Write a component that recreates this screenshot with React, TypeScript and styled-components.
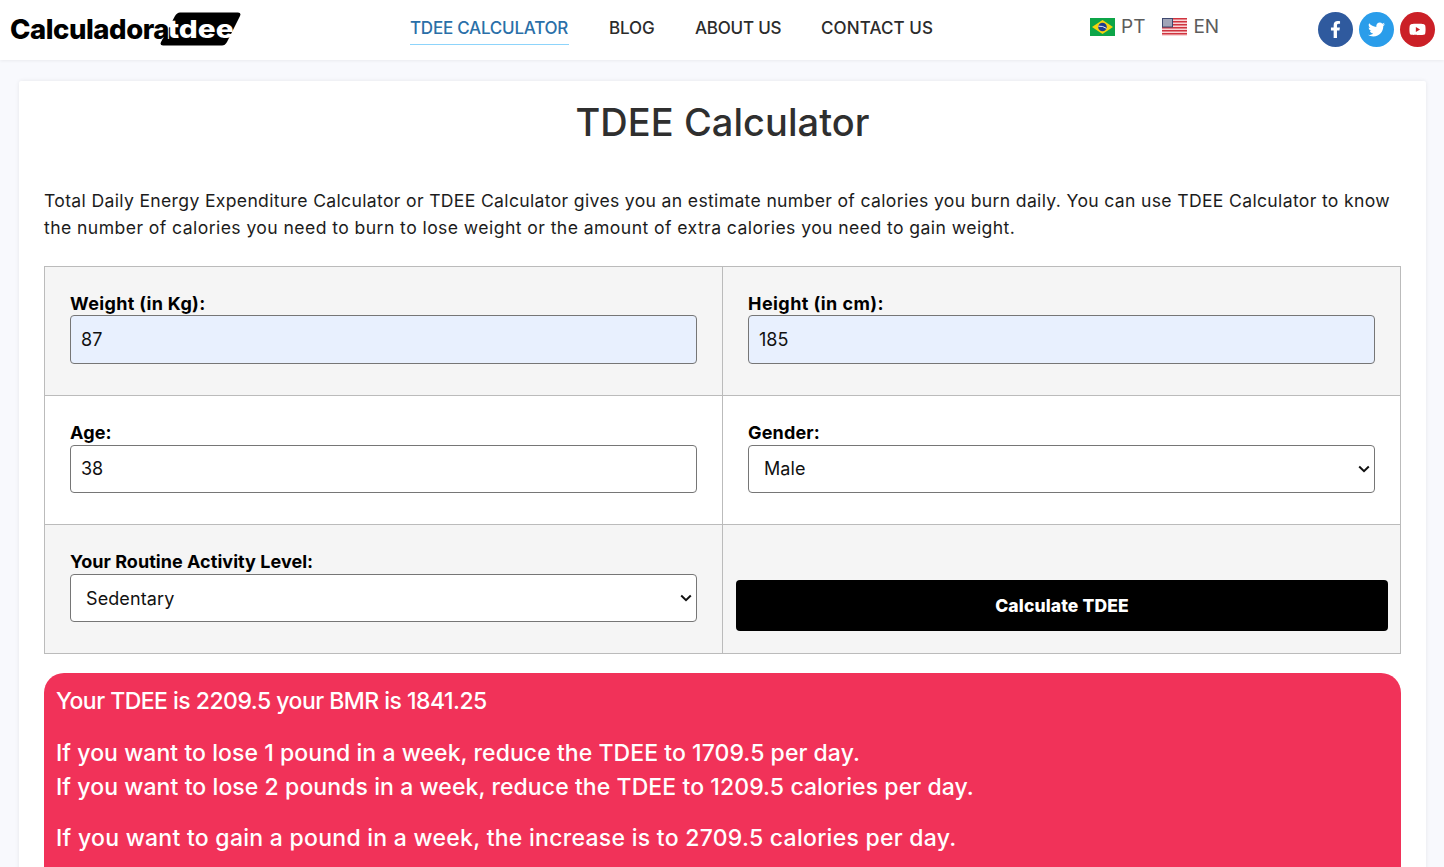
import React from 'react';
import styled, { createGlobalStyle } from 'styled-components';
import { FaFacebookF, FaTwitter, FaYoutube } from 'react-icons/fa';

const GlobalStyle = createGlobalStyle`
  html, body {
    margin: 0;
    padding: 0;
    background: #f8f9fd;
  }
  * {
    box-sizing: border-box;
  }
`;

const FONT = `Inter, "Open Sans", "Liberation Sans", sans-serif`;

const CHEVRON = `url("data:image/svg+xml,%3Csvg xmlns='http://www.w3.org/2000/svg' width='12' height='8' viewBox='0 0 12 8'%3E%3Cpath d='M1.200 1.500L6 6.200L10.800 1.500' fill='none' stroke='%23111' stroke-width='2'/%3E%3C/svg%3E")`;

const Page = styled.div`
  height: 867px;
  overflow: hidden;
  font-family: ${FONT};
  color: #000;
`;

const Header = styled.header`
  display: grid;
  grid-template-columns: 410px 680px 228px 1fr;
  align-items: center;
  height: 60px;
  background: #fff;
  box-shadow: 0 1px 3px rgba(0, 0, 0, 0.06);
`;

const Logo = styled.a`
  display: flex;
  align-items: center;
  padding-left: 10px;
  margin-top: -3px;
  font-size: 27.5px;
  font-weight: 800;
  letter-spacing: -0.45px;
  color: #000;
`;

const LogoWord = styled.span`
  position: relative;
  z-index: 1;
  text-shadow: 1px 0 0 #fff;
`;

const LogoBadge = styled.span`
  position: relative;
  display: inline-flex;
  align-items: center;
  justify-content: center;
  width: 81px;
  height: 34px;
  margin-left: -9px;
  color: #fff;

  svg {
    position: absolute;
    inset: 0;
  }
`;

const LogoBadgeText = styled.span`
  position: relative;
  font-size: 25px;
  letter-spacing: 0;
  transform: scaleX(1.19);
`;

const Nav = styled.nav`
  display: flex;
  gap: 40px;
  align-items: flex-start;
  align-self: start;
  padding-top: 13px;
`;

const NavLink = styled.a<{ $active?: boolean; $width: number; $spacing: number }>`
  display: block;
  width: ${(p) => p.$width}px;
  height: 32px;
  padding-top: 4px;
  font-size: 17px;
  line-height: 22px;
  font-weight: 500;
  letter-spacing: ${(p) => p.$spacing}px;
  white-space: nowrap;
  color: ${(p) => (p.$active ? '#2a6fa8' : '#2b2b2b')};
  border-bottom: 1px solid ${(p) => (p.$active ? '#8dd4fb' : 'transparent')};
`;

const Langs = styled.div`
  display: flex;
  gap: 17px;
  margin-top: -7px;
`;

const Lang = styled.a`
  display: flex;
  align-items: center;
  gap: 6px;
  font-size: 19px;
  font-weight: 400;
  color: #5c5c5c;
`;

const Socials = styled.div`
  display: flex;
  gap: 6px;
  margin-top: -2px;
`;

const Social = styled.a<{ $bg: string }>`
  display: flex;
  align-items: center;
  justify-content: center;
  width: 35px;
  height: 35px;
  border-radius: 50%;
  background: ${(p) => p.$bg};
  color: #fff;
  font-size: 17px;
`;

const Card = styled.main`
  margin: 21px 18px 0 19px;
  padding: 0 25px;
  background: #fff;
  box-shadow: 0 0 4px rgba(0, 0, 0, 0.08);
  border-radius: 2px;
`;

const Title = styled.h1`
  margin: 0;
  padding-top: 16px;
  height: 105.6px;
  text-align: center;
  font-size: 38px;
  line-height: 50px;
  font-weight: 500;
  letter-spacing: 0.05px;
  color: #2f2f2f;
`;

const Intro = styled.p`
  margin: 0 0 25px;
  font-size: 17.6px;
  line-height: 27px;
  color: #1c1c1c;
  white-space: nowrap;
`;

const IntroLine = styled.span<{ $spacing: number }>`
  display: block;
  letter-spacing: ${(p) => p.$spacing}px;
`;

const FormGrid = styled.div`
  display: grid;
  grid-template-columns: 677px 1fr;
  grid-auto-rows: 129.2px;
  border: 1px solid #bbb;
  border-bottom: 0;
`;

const Cell = styled.div<{ $shaded?: boolean; $right?: boolean }>`
  display: flex;
  flex-direction: column;
  padding: 25px 25px 0;
  background: ${(p) => (p.$shaded ? '#f5f5f5' : '#fff')};
  border-bottom: 1px solid #bbb;
  border-left: ${(p) => (p.$right ? '1px solid #bbb' : '0')};
`;

const ButtonCell = styled(Cell)`
  padding: 55px 12px 0 13px;
`;

const Label = styled.label<{ $spacing?: number }>`
  height: 23.8px;
  font-size: 18px;
  line-height: 24px;
  font-weight: 700;
  letter-spacing: ${(p) => p.$spacing ?? 0.15}px;
`;

const TextInput = styled.input<{ $filled?: boolean }>`
  width: 100%;
  height: 48.6px;
  padding: 0 10px;
  font-family: ${FONT};
  font-size: 18px;
  color: #111;
  background: ${(p) => (p.$filled ? '#e8f0fe' : '#fff')};
  border: 1px solid #767676;
  border-radius: 4px;
`;

const SelectInput = styled.select`
  appearance: none;
  width: 100%;
  height: 48.6px;
  padding: 0 15px;
  font-family: ${FONT};
  font-size: 18px;
  letter-spacing: 0.1px;
  color: #111;
  background: #fff ${CHEVRON} no-repeat right 4px center;
  border: 1px solid #767676;
  border-radius: 4px;
`;

const SubmitButton = styled.button`
  width: 100%;
  height: 51px;
  font-family: ${FONT};
  font-size: 17.5px;
  font-weight: 800;
  letter-spacing: 0.13px;
  color: #fff;
  background: #000;
  border: 0;
  border-radius: 4px;
`;

const Result = styled.section`
  margin-top: 19px;
  padding: 11px 12px 20px;
  min-height: 300px;
  background: #f13259;
  border-radius: 20px;
  color: #fff;
  font-size: 23px;
  line-height: 34px;
  font-weight: 500;
`;

const ResultBlock = styled.div`
  margin: 0 0 17.5px;
  white-space: nowrap;
`;

const ResultLine = styled.span<{ $spacing: number }>`
  display: block;
  letter-spacing: ${(p) => p.$spacing}px;
`;

const LogoShape = () => (
  <svg width="81" height="34" viewBox="0 0 81 34">
    <path d="M20 0.500H78Q81.500 0.500 80 4L67 30Q65 33.500 62 33.500H3Q-0.500 33.500 1 30L15 4Q17 0.500 20 0.500Z" fill="#000" />
  </svg>
);

const BrazilFlag = () => (
  <svg width="25" height="18" viewBox="0 0 25 18">
    <rect width="25" height="18" fill="#0da548" />
    <path d="M12.500 2L23 9L12.500 16L2 9Z" fill="#f5d30f" />
    <circle cx="12.500" cy="9" r="4.300" fill="#1d3d8f" />
    <path d="M8.400 8.200Q12.500 7.600 16.500 10.400" stroke="#fff" strokeWidth="0.9" fill="none" />
  </svg>
);

const UsFlag = () => (
  <svg width="25" height="18" viewBox="0 0 25 18">
    <rect width="25" height="18" fill="#f9d5d6" />
    {[0, 3, 6, 9, 12, 15].map((y) => (
      <rect key={y} y={y} width="25" height="1.500" fill="#d0343f" />
    ))}
    <rect width="11" height="9.500" fill="#3f4a70" />
    <rect x="1" y="1" width="9" height="7.500" fill="#a1a5b8" />
  </svg>
);

const App: React.FC = () => {
  return (
    <Page>
      <GlobalStyle />
      <Header>
        <Logo>
          <LogoWord>Calculadora</LogoWord>
          <LogoBadge>
            <LogoShape />
            <LogoBadgeText>tdee</LogoBadgeText>
          </LogoBadge>
        </Logo>
        <Nav>
          <NavLink $active $width={159} $spacing={-0.23}>TDEE CALCULATOR</NavLink>
          <NavLink $width={46} $spacing={-0.1}>BLOG</NavLink>
          <NavLink $width={86} $spacing={-0.22}>ABOUT US</NavLink>
          <NavLink $width={112} $spacing={0.1}>CONTACT US</NavLink>
        </Nav>
        <Langs>
          <Lang><BrazilFlag />PT</Lang>
          <Lang><UsFlag />EN</Lang>
        </Langs>
        <Socials>
          <Social $bg="#2f5a9e"><FaFacebookF /></Social>
          <Social $bg="#2a9dea"><FaTwitter /></Social>
          <Social $bg="#cb2027"><FaYoutube /></Social>
        </Socials>
      </Header>
      <Card>
        <Title>TDEE Calculator</Title>
        <Intro>
          <IntroLine $spacing={0.327}>
            Total Daily Energy Expenditure Calculator or TDEE Calculator gives you an estimate number of calories you burn daily. You can use TDEE Calculator to know
          </IntroLine>
          <IntroLine $spacing={0.42}>
            the number of calories you need to burn to lose weight or the amount of extra calories you need to gain weight.
          </IntroLine>
        </Intro>
        <FormGrid>
          <Cell $shaded>
            <Label $spacing={0.35}>Weight (in Kg):</Label>
            <TextInput $filled defaultValue="87" />
          </Cell>
          <Cell $shaded $right>
            <Label $spacing={0.44}>Height (in cm):</Label>
            <TextInput $filled defaultValue="185" />
          </Cell>
          <Cell>
            <Label>Age:</Label>
            <TextInput defaultValue="38" />
          </Cell>
          <Cell $right>
            <Label>Gender:</Label>
            <SelectInput defaultValue="Male">
              <option>Male</option>
              <option>Female</option>
            </SelectInput>
          </Cell>
          <Cell $shaded>
            <Label $spacing={0.04}>Your Routine Activity Level:</Label>
            <SelectInput defaultValue="Sedentary">
              <option>Sedentary</option>
              <option>Lightly active</option>
            </SelectInput>
          </Cell>
          <ButtonCell $shaded $right>
            <SubmitButton>Calculate TDEE</SubmitButton>
          </ButtonCell>
        </FormGrid>
        <Result>
          <ResultBlock>
            <ResultLine $spacing={-0.52}>Your TDEE is 2209.5 your BMR is 1841.25</ResultLine>
          </ResultBlock>
          <ResultBlock>
            <ResultLine $spacing={0.06}>If you want to lose 1 pound in a week, reduce the TDEE to 1709.5 per day.</ResultLine>
            <ResultLine $spacing={0.08}>If you want to lose 2 pounds in a week, reduce the TDEE to 1209.5 calories per day.</ResultLine>
          </ResultBlock>
          <ResultBlock>
            <ResultLine $spacing={0.27}>If you want to gain a pound in a week, the increase is to 2709.5 calories per day.</ResultLine>
          </ResultBlock>
        </Result>
      </Card>
    </Page>
  );
};

export default App;
